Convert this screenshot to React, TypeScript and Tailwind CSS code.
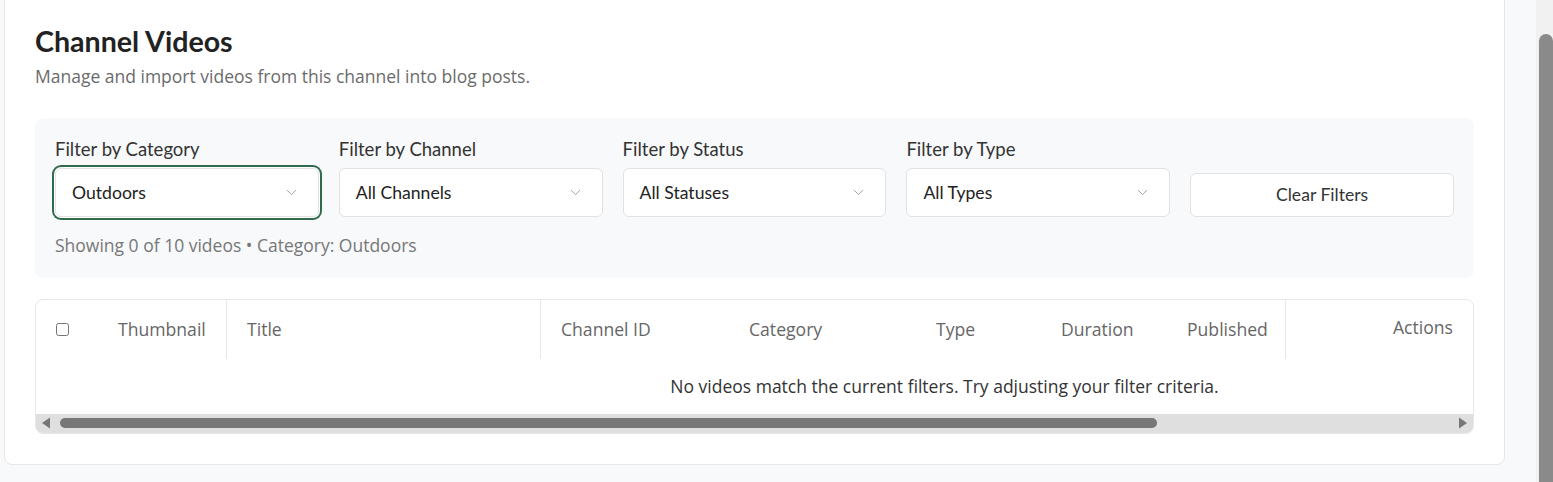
import { ChevronDown } from "lucide-react";

const filters = [
  { label: "Filter by Category", value: "Outdoors", focused: true },
  { label: "Filter by Channel", value: "All Channels" },
  { label: "Filter by Status", value: "All Statuses" },
  { label: "Filter by Type", value: "All Types" },
];

function FilterSelect({ label, value, focused }: { label: string; value: string; focused?: boolean }) {
  return (
    <div className="flex min-w-0 flex-col gap-2">
      <label className="font-['Lato',sans-serif] text-[18.5px] leading-[22px] text-[#333]">{label}</label>
      <div
        className={`flex h-[49px] items-center justify-between rounded-md border border-[#e2e2e2] bg-white pl-4 pr-[18px] ${
          focused ? "ring-2 ring-[#2f6b4c] ring-offset-1" : ""
        }`}
      >
        <span className="font-['Lato',sans-serif] text-[17.6px] text-[#222]">{value}</span>
        <ChevronDown size={17} strokeWidth={1.3} className="text-[#999]" />
      </div>
    </div>
  );
}

// drawn scrollbar: the headless browser hides native ones
function HScrollbar() {
  return (
    <div className="flex h-[19px] items-center bg-[#dfdfdf] pl-[5px] pr-[5px]">
      <svg width="10" height="12" viewBox="0 0 10 12">
        <path d="M9 0.5 L9 11.5 L1 6 Z" fill="#777" />
      </svg>
      <div className="ml-[9px] h-[10px] w-[1097px] rounded-full bg-[#777]" />
      <div className="flex-1" />
      <svg width="10" height="12" viewBox="0 0 10 12">
        <path d="M1 0.5 L1 11.5 L9 6 Z" fill="#777" />
      </svg>
    </div>
  );
}

export default function App() {
  return (
    <div className="flex h-screen w-full overflow-hidden bg-[#f8f9fb] font-['Open_Sans',sans-serif]">
      <div className="min-w-0 flex-1 pl-1 pr-[31px]">
        <div className="-mt-2 min-w-0 rounded-lg border border-[#e5e7eb] bg-white p-[30px]">
          <h1 className="font-['Lato',sans-serif] text-[28.6px] font-bold leading-9 text-[#222]">Channel Videos</h1>
          <p className="mt-1 text-[17.5px] text-[#6b6b6b]">Manage and import videos from this channel into blog posts.</p>

          <div className="mt-[29px] rounded-lg bg-[#f8f9fb] px-5 pb-[19px] pt-5">
            <div className="grid grid-cols-5 items-end gap-5">
              {filters.map((f) => (
                <FilterSelect key={f.label} {...f} />
              ))}
              <button className="h-11 rounded-md border border-[#e2e2e2] bg-white font-['Lato',sans-serif] text-[17.6px] text-[#333]">
                Clear Filters
              </button>
            </div>
            <p className="mt-[15px] text-[17.5px] text-[#777]">Showing 0 of 10 videos • Category: Outdoors</p>
          </div>

          <div className="mt-[21px] overflow-hidden rounded-lg border border-[#e5e7eb]">
            <div className="overflow-x-auto [scrollbar-width:none]">
              <table className="w-[1817px] table-fixed border-separate border-spacing-0 text-left">
                <colgroup>
                  <col className="w-[62px]" />
                  <col className="w-[129px]" />
                  <col className="w-[314px]" />
                  <col className="w-[188px]" />
                  <col className="w-[187px]" />
                  <col className="w-[125px]" />
                  <col className="w-[126px]" />
                  <col />
                  <col className="w-[188px]" />
                </colgroup>
                <thead>
                  <tr className="h-[59px] text-[17.6px] text-[#666]">
                    <th className="pl-5 font-normal">
                      <input type="checkbox" className="block" />
                    </th>
                    <th className="border-r border-[#e5e7eb] px-5 font-medium">Thumbnail</th>
                    <th className="border-r border-[#e5e7eb] px-5 font-medium">Title</th>
                    <th className="px-5 font-medium">Channel ID</th>
                    <th className="px-5 font-medium">Category</th>
                    <th className="px-5 font-medium">Type</th>
                    <th className="px-5 font-medium">Duration</th>
                    <th className="px-5 font-medium">Published</th>
                    <th className="sticky right-0 border-l border-[#e5e7eb] bg-white px-5 pb-[3px] text-right font-medium">Actions</th>
                  </tr>
                </thead>
                <tbody>
                  <tr className="h-[55px]">
                    <td colSpan={9} className="text-center text-[17.5px] text-[#333]">
                      No videos match the current filters. Try adjusting your filter criteria.
                    </td>
                  </tr>
                </tbody>
              </table>
            </div>
            <HScrollbar />
          </div>
        </div>
      </div>
      <div className="w-[17px] bg-[#f1f1f1] pl-[3px] pt-[34px]">
        <div className="h-full rounded-t-full bg-[#8a8a8a]" />
      </div>
    </div>
  );
}
